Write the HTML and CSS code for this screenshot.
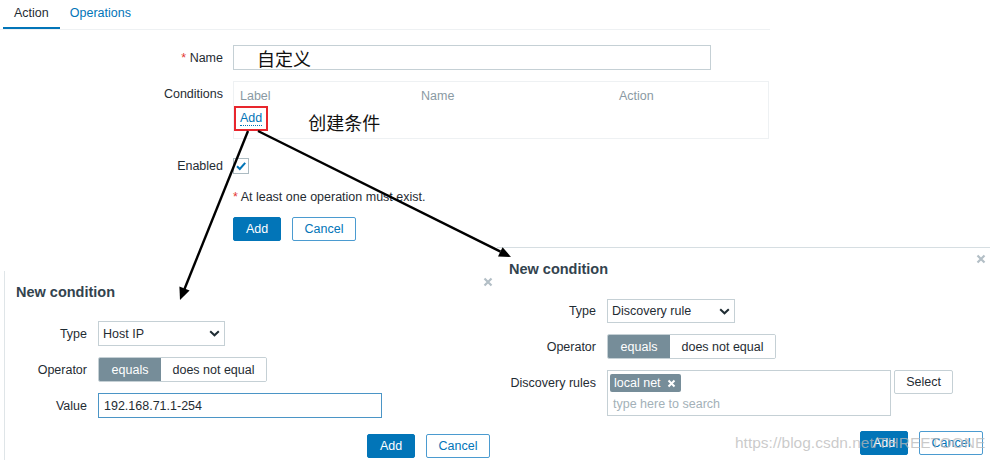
FILE: index.html
```html
<!DOCTYPE html>
<html>
<head>
<meta charset="utf-8">
<link rel="stylesheet" href="styles.css">
</head>
<body>
<div class="screen">
  <div class="page">
    <div class="tabs">
      <div class="tab active">Action</div>
      <div class="tab link-tab">Operations</div>
    </div>
    <div class="form">
      <div class="row row-name">
        <div class="label"><span class="req">*</span> Name</div>
        <div class="input name-input">自定义</div>
      </div>
      <div class="row row-cond">
        <div class="label label-top">Conditions</div>
        <div class="cond-table">
          <div class="cond-head"><span class="c1">Label</span><span class="c2">Name</span><span class="c3">Action</span></div>
          <div class="cond-add"><span class="mark"><span class="link">Add</span></span><span class="note">创建条件</span></div>
        </div>
      </div>
      <div class="row row-enabled">
        <div class="label">Enabled</div>
        <span class="checkbox"><svg width="14" height="14" viewBox="0 0 14 14"><path d="M3 7.2 L5.8 10 L11.2 3.8" fill="none" stroke="#0275b8" stroke-width="2"/></svg></span>
      </div>
      <div class="row row-warn">
        <div class="label"></div>
        <div class="warn"><span class="req">*</span> At least one operation must exist.</div>
      </div>
      <div class="row row-btns">
        <div class="label"></div>
        <div class="btns">
          <span class="btn btn-primary">Add</span>
          <span class="btn btn-alt">Cancel</span>
        </div>
      </div>
    </div>
  </div>

  <div class="dialog dlg-left">
    <div class="dlg-title">New condition</div>
    <span class="close"><svg width="10" height="10" viewBox="0 0 10 10"><path d="M1.5 1.5 L8.5 8.5 M8.5 1.5 L1.5 8.5" stroke="#b3bfc6" stroke-width="2.2"/></svg></span>
    <div class="dlg-form">
      <div class="dlabel">Type</div>
      <div class="dfield"><div class="select sel-host">Host IP<svg class="chev" width="11" height="7" viewBox="0 0 11 7"><path d="M1.2 1.2 L5.5 5.3 L9.8 1.2" fill="none" stroke="#1f2c33" stroke-width="2"/></svg></div></div>
      <div class="dlabel">Operator</div>
      <div class="dfield"><div class="seg"><span class="seg-on">equals</span><span class="seg-off">does not equal</span></div></div>
      <div class="dlabel">Value</div>
      <div class="dfield"><div class="input value-input">192.168.71.1-254</div></div>
    </div>
    <div class="dlg-foot">
      <span class="btn btn-primary">Add</span>
      <span class="btn btn-alt">Cancel</span>
    </div>
  </div>

  <div class="dialog dlg-right">
    <div class="dlg-title">New condition</div>
    <span class="close"><svg width="10" height="10" viewBox="0 0 10 10"><path d="M1.5 1.5 L8.5 8.5 M8.5 1.5 L1.5 8.5" stroke="#b3bfc6" stroke-width="2.2"/></svg></span>
    <div class="dlg-form">
      <div class="dlabel">Type</div>
      <div class="dfield"><div class="select sel-disc">Discovery rule<svg class="chev" width="11" height="7" viewBox="0 0 11 7"><path d="M1.2 1.2 L5.5 5.3 L9.8 1.2" fill="none" stroke="#1f2c33" stroke-width="2"/></svg></div></div>
      <div class="dlabel">Operator</div>
      <div class="dfield"><div class="seg"><span class="seg-on">equals</span><span class="seg-off">does not equal</span></div></div>
      <div class="dlabel dlabel-top">Discovery rules</div>
      <div class="dfield">
        <div class="multi">
          <span class="chip">local net <svg width="9" height="9" viewBox="0 0 9 9"><path d="M1.5 1.5 L7.5 7.5 M7.5 1.5 L1.5 7.5" stroke="#fff" stroke-width="2"/></svg></span>
          <span class="placeholder">type here to search</span>
        </div>
        <span class="btn btn-grey">Select</span>
      </div>
    </div>
    <div class="dlg-foot">
      <span class="btn btn-primary">Add</span>
      <span class="btn btn-alt">Cancel</span>
    </div>
  </div>

  <svg class="arrows" width="1000" height="460" viewBox="0 0 1000 460">
    <line x1="248" y1="131" x2="184.5" y2="289" stroke="#000" stroke-width="2.4"/>
    <polygon points="180,300 189.6,290.6 179.4,286.6" fill="#000"/>
    <line x1="258" y1="131" x2="500.5" y2="251.6" stroke="#000" stroke-width="2.4"/>
    <polygon points="511,257 498,256.4 502.6,247.2" fill="#000"/>
  </svg>

  <div class="watermark">https://blog.csdn.net/THREETOONE</div>
</div>
</body>
</html>
```

FILE: styles.css
```css
* { box-sizing: border-box; }

html, body {
  margin: 0;
  padding: 0;
  background: #fff;
}

body {
  font-family: "Liberation Sans", Arial, sans-serif;
  font-size: 12.5px;
  color: #1f2c33;
}

.screen {
  position: relative;
  width: 1000px;
  height: 460px;
  overflow: hidden;
  background: #fff;
}

/* ---------- main page ---------- */
.page {
  width: 770px;
}

.tabs {
  display: flex;
  height: 30px;
  padding-left: 3px;
  border-bottom: 1px solid #eef1f3;
}

.tab {
  line-height: 26px;
  padding: 0 11px 1px;
  color: #1f2c33;
}

.tab.active {
  border-bottom: 2px solid #0275b8;
}

.link-tab {
  color: #0275b8;
  padding-left: 10px;
}

.form {
  display: flex;
  flex-direction: column;
  margin-top: 15px;
}

.row {
  display: flex;
  align-items: center;
}

.label {
  width: 223px;
  margin-right: 10px;
  text-align: right;
  flex: none;
}

.label-top {
  align-self: flex-start;
  padding-top: 6px;
}

.req {
  color: #e33734;
}

.input {
  height: 25px;
  border: 1px solid #c5d0d5;
  background: #fff;
  display: flex;
  align-items: center;
}

.row-name {
  height: 25px;
}

.name-input {
  width: 478px;
  padding-left: 23px;
  font-family: "Noto Sans CJK SC", sans-serif;
  font-size: 18px;
  color: #111;
}

.row-cond {
  margin-top: 11px;
}

.cond-table {
  width: 536px;
  border: 1px solid #eef1f3;
  padding-bottom: 7px;
}

.cond-head {
  display: flex;
  padding: 6px 0 0 6px;
  line-height: 16px;
  color: #8a9aa3;
}

.c1 { width: 181px; }
.c2 { width: 198px; }

.cond-add {
  display: flex;
  align-items: center;
  margin-top: 2px;
  height: 25px;
}

.mark {
  display: inline-flex;
  align-items: center;
  height: 25px;
  padding: 0 4px;
  border: 2px solid #e8262d;
}

.link {
  color: #0275b8;
  line-height: 14px;
  border-bottom: 1px dotted #0275b8;
}

.note {
  margin-left: 40px;
  margin-top: 7px;
  font-family: "Noto Sans CJK SC", sans-serif;
  font-size: 18px;
  color: #111;
}

.row-enabled {
  margin-top: 14px;
  height: 25px;
}

.checkbox {
  width: 16px;
  height: 16px;
  border: 1px solid #acbbc2;
  background: #fff;
  display: inline-flex;
  align-items: center;
  justify-content: center;
}

.row-warn {
  margin-top: 7px;
  height: 24px;
}

.row-btns {
  margin-top: 8px;
}

.btns {
  display: flex;
  gap: 11px;
}

.btn {
  display: inline-flex;
  align-items: center;
  justify-content: center;
  height: 24px;
  border-radius: 2px;
  font-size: 12.5px;
  flex: none;
}

.btn-primary {
  width: 48px;
  background: #0275b8;
  border: 1px solid #0275b8;
  color: #fff;
}

.btn-alt {
  width: 64px;
  background: #fff;
  border: 1px solid #4b9bd0;
  color: #0275b8;
}

.btn-grey {
  width: 59px;
  background: #fff;
  border: 1px solid #c5d0d5;
  color: #1f2c33;
  margin-left: 3px;
}

/* ---------- dialogs ---------- */
.dialog {
  position: absolute;
  background: #fff;
  width: 493px;
}

.dlg-left {
  left: 4px;
  top: 271px;
  height: 189px;
  border-left: 1px solid #dfe5e8;
  padding-left: 11px;
}

.dlg-right {
  left: 497px;
  top: 247px;
  height: 213px;
  border-top: 1px solid #d6dee2;
  padding-left: 12px;
}

.dlg-title {
  margin-top: 12px;
  font-size: 14.5px;
  font-weight: bold;
  line-height: 18px;
  color: #33434e;
}

.close {
  position: absolute;
  top: 6px;
  right: 4px;
  width: 10px;
  height: 10px;
  display: block;
  line-height: 0;
}

.dlg-form {
  display: grid;
  row-gap: 11px;
  column-gap: 11px;
  margin-top: 20px;
  align-items: center;
}

.dlg-left .dlg-form {
  grid-template-columns: 71px 1fr;
}

.dlg-right .dlg-form {
  grid-template-columns: 87px 1fr;
  margin-top: 21px;
}

.dlabel {
  text-align: right;
  white-space: nowrap;
}

.dlabel-top {
  align-self: start;
  line-height: 26px;
}

.dfield {
  display: flex;
  align-items: flex-start;
}

.select {
  position: relative;
  height: 25px;
  border: 1px solid #c5d0d5;
  display: flex;
  align-items: center;
  padding-left: 4px;
  background: #fff;
}

.sel-host { width: 127px; }
.sel-disc { width: 128px; height: 24px; }

.chev {
  position: absolute;
  right: 4px;
  top: 8px;
}

.seg {
  display: flex;
  height: 25px;
  border: 1px solid #c5d0d5;
  border-radius: 2px;
  overflow: hidden;
}

.seg span {
  display: flex;
  align-items: center;
  justify-content: center;
}

.seg-on {
  width: 62px;
  background: #768d99;
  color: #fff;
}

.seg-off {
  width: 105px;
  background: #fff;
}

.value-input {
  width: 284px;
  height: 25px;
  padding-left: 5px;
  border-color: #4b95c6;
}

.multi {
  width: 284px;
  height: 46px;
  border: 1px solid #c5d0d5;
  padding: 3px 0 0 2px;
  display: flex;
  flex-direction: column;
  align-items: flex-start;
}

.chip {
  display: inline-flex;
  align-items: center;
  gap: 6px;
  height: 18px;
  padding: 0 5px 0 4px;
  border-radius: 2px;
  background: #768d99;
  color: #fff;
}

.placeholder {
  margin-top: 5px;
  padding-left: 3px;
  color: #a3b1b8;
}

.dlg-foot {
  display: flex;
  justify-content: flex-end;
  gap: 11px;
  margin-top: 16px;
  padding-right: 7px;
}

.dlg-right .dlg-foot {
  margin-top: 15px;
}

/* ---------- overlays ---------- */
.arrows {
  position: absolute;
  left: 0;
  top: 0;
  pointer-events: none;
}

.watermark {
  position: absolute;
  left: 735px;
  top: 434px;
  font-size: 15.5px;
  line-height: 18px;
  color: rgba(185, 185, 185, 0.75);
  white-space: nowrap;
}
```
